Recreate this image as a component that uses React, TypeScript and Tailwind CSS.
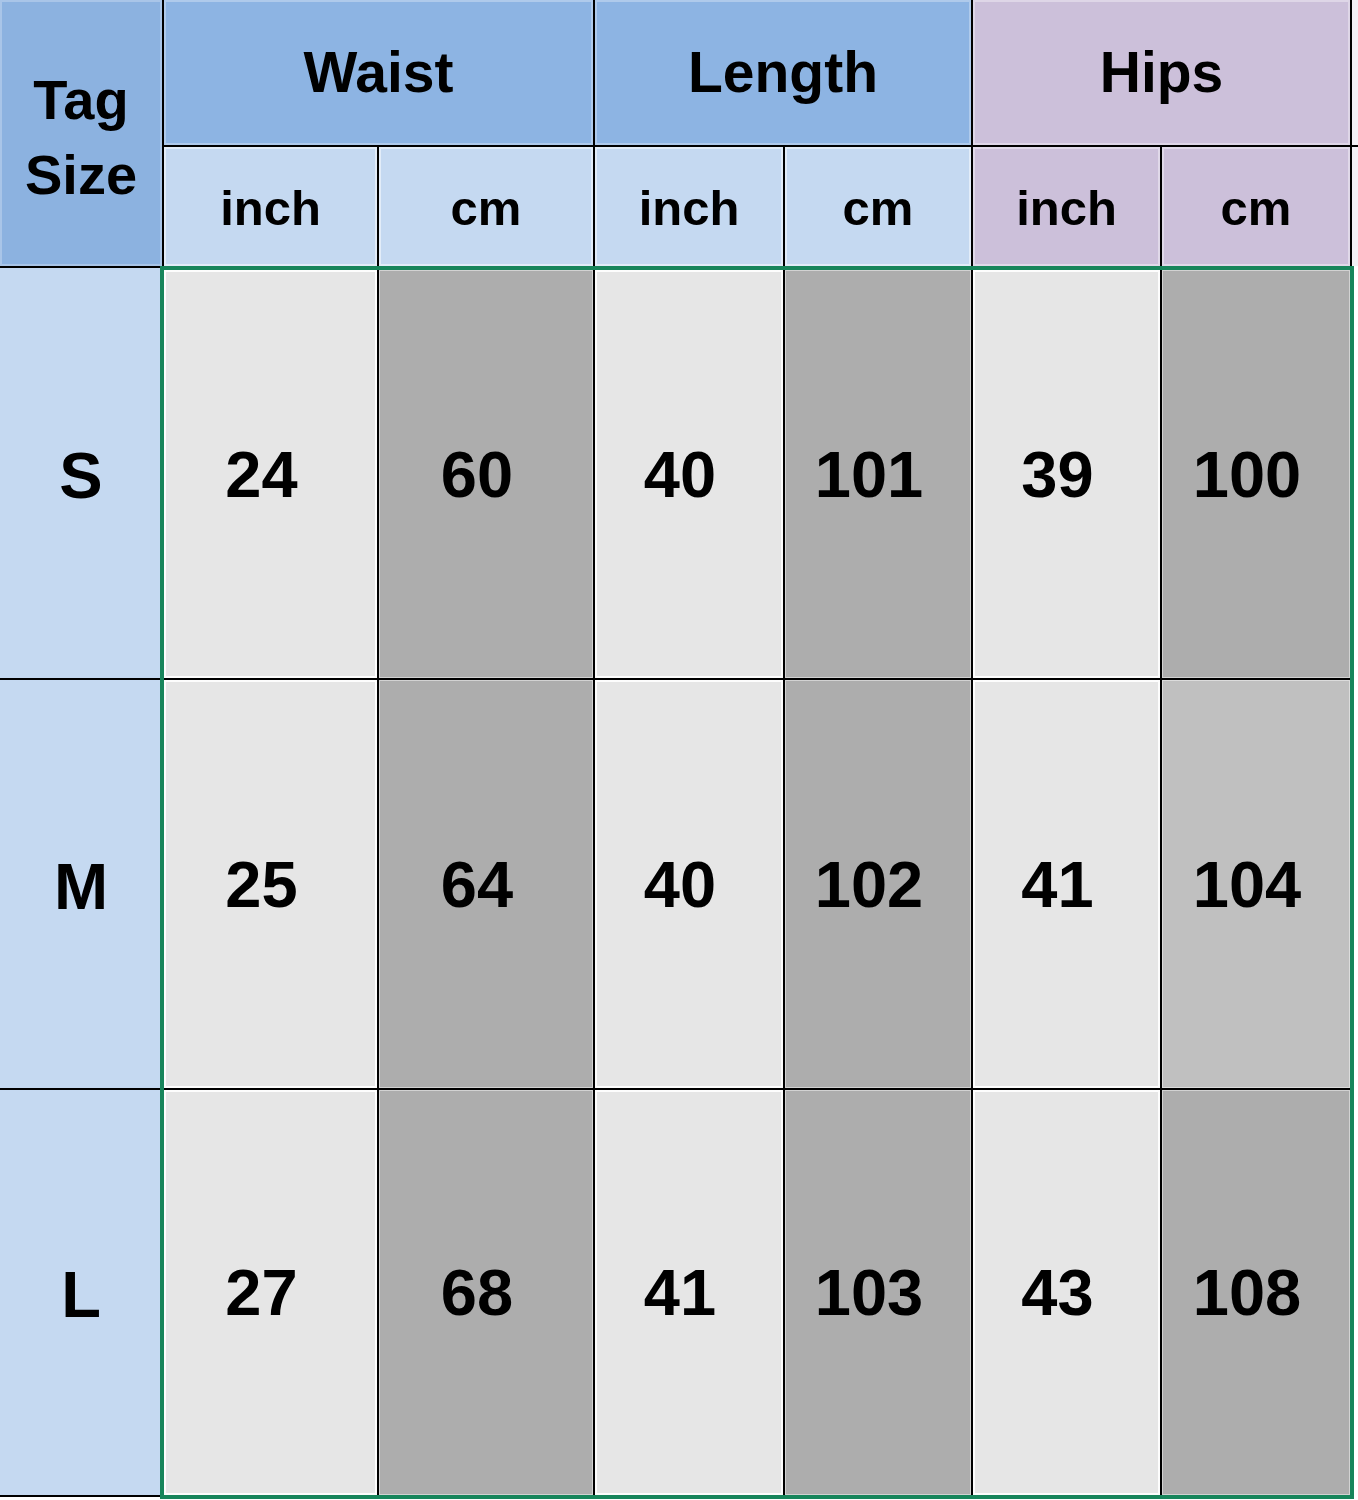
import React from 'react';

const font = { fontFamily: '"Liberation Sans", Arial, sans-serif' };

type Row = { size: string; values: string[]; tone?: string };

const rows: Row[] = [
  { size: 'S', values: ['24', '60', '40', '101', '39', '100'] },
  { size: 'M', values: ['25', '64', '40', '102', '41', '104'], tone: 'lastLight' },
  { size: 'L', values: ['27', '68', '41', '103', '43', '108'] },
];

const rowHeights = ['h-[408px]', 'h-[408px]', 'h-[405px]'];
const sideHeights = ['h-[410px]', 'h-[408px]', 'h-[405px]'];

function DataCell({ value, dark, lighter, height }: { value: string; dark: boolean; lighter?: boolean; height: string }) {
  const bg = dark ? (lighter ? 'bg-[#c0c0c0]' : 'bg-[#adadad]') : 'bg-[#e6e6e6]';
  const ring = dark
    ? 'shadow-[inset_0_0_0_1px_rgba(255,255,255,0.45)]'
    : 'shadow-[inset_0_0_0_2px_rgba(255,255,255,0.9)]';
  return (
    <div className={`${height} ${bg} ${ring} flex items-center justify-center pr-[18px]`}>
      <span className="text-[65px] font-bold leading-none text-black">{value}</span>
    </div>
  );
}

export default function App() {
  return (
    <div className="w-[1358px] h-[1500px] bg-white flex overflow-hidden" style={font}>
      {/* tag size column */}
      <div className="w-[162px] h-[1497px] bg-black flex flex-col gap-[2px] shrink-0">
        <div className="h-[266px] bg-[#8cb2e0] shadow-[inset_0_0_0_2px_rgba(255,255,255,0.25)] flex flex-col items-center justify-center pt-[8px]">
          <span className="text-[56px] font-bold leading-[75px] text-black">Tag</span>
          <span className="text-[56px] font-bold leading-[75px] text-black">Size</span>
        </div>
        {rows.map((r, i) => (
          <div
            key={r.size}
            className={`${sideHeights[i]} bg-[#c5d9f1] flex items-center justify-center pt-[4px]`}
          >
            <span className="text-[65px] font-bold leading-none text-black">{r.size}</span>
          </div>
        ))}
      </div>

      <div className="w-[2px] h-[1497px] bg-black shrink-0" />

      {/* header + data */}
      <div className="w-[1194px] flex flex-col shrink-0">
        <div className="bg-black grid grid-cols-[213px_214px_188px_186px_187px_188px_6px] grid-rows-[145px_119px] gap-[2px]">
          <div className="col-span-2 bg-[#8db4e3] shadow-[inset_0_0_0_2px_rgba(255,255,255,0.3)] flex items-center justify-center">
            <span className="text-[57px] font-bold leading-none text-black">Waist</span>
          </div>
          <div className="col-span-2 bg-[#8db4e3] shadow-[inset_0_0_0_2px_rgba(255,255,255,0.3)] flex items-center justify-center">
            <span className="text-[57px] font-bold leading-none text-black">Length</span>
          </div>
          <div className="col-span-2 bg-[#ccc0da] shadow-[inset_0_0_0_2px_rgba(255,255,255,0.35)] flex items-center justify-center">
            <span className="text-[57px] font-bold leading-none text-black">Hips</span>
          </div>
          <div className="bg-[#f2f0f5]" />

          {['inch', 'cm', 'inch', 'cm'].map((u, i) => (
            <div
              key={`b${i}`}
              className="bg-[#c5d9f1] shadow-[inset_0_0_0_2px_rgba(255,255,255,0.5)] flex items-center justify-center pt-[4px]"
            >
              <span className="text-[49px] font-bold leading-none text-black">{u}</span>
            </div>
          ))}
          {['inch', 'cm'].map((u, i) => (
            <div
              key={`p${i}`}
              className="bg-[#ccc0da] shadow-[inset_0_0_0_2px_rgba(255,255,255,0.4)] flex items-center justify-center pt-[4px]"
            >
              <span className="text-[49px] font-bold leading-none text-black">{u}</span>
            </div>
          ))}
          <div className="bg-[#f2f0f5]" />
        </div>

        {/* data block with selection border */}
        <div className="-ml-[4px] w-[1194px] bg-black border-4 border-[#17855b]">
          <div className="grid grid-cols-[213px_214px_188px_186px_187px_188px] gap-[2px]">
            {rows.map((r, ri) =>
              r.values.map((v, ci) => (
                <DataCell
                  key={`${ri}-${ci}`}
                  value={v}
                  dark={ci % 2 === 1}
                  lighter={r.tone === 'lastLight' && ci === 5}
                  height={rowHeights[ri]}
                />
              ))
            )}
          </div>
        </div>
      </div>
    </div>
  );
}
